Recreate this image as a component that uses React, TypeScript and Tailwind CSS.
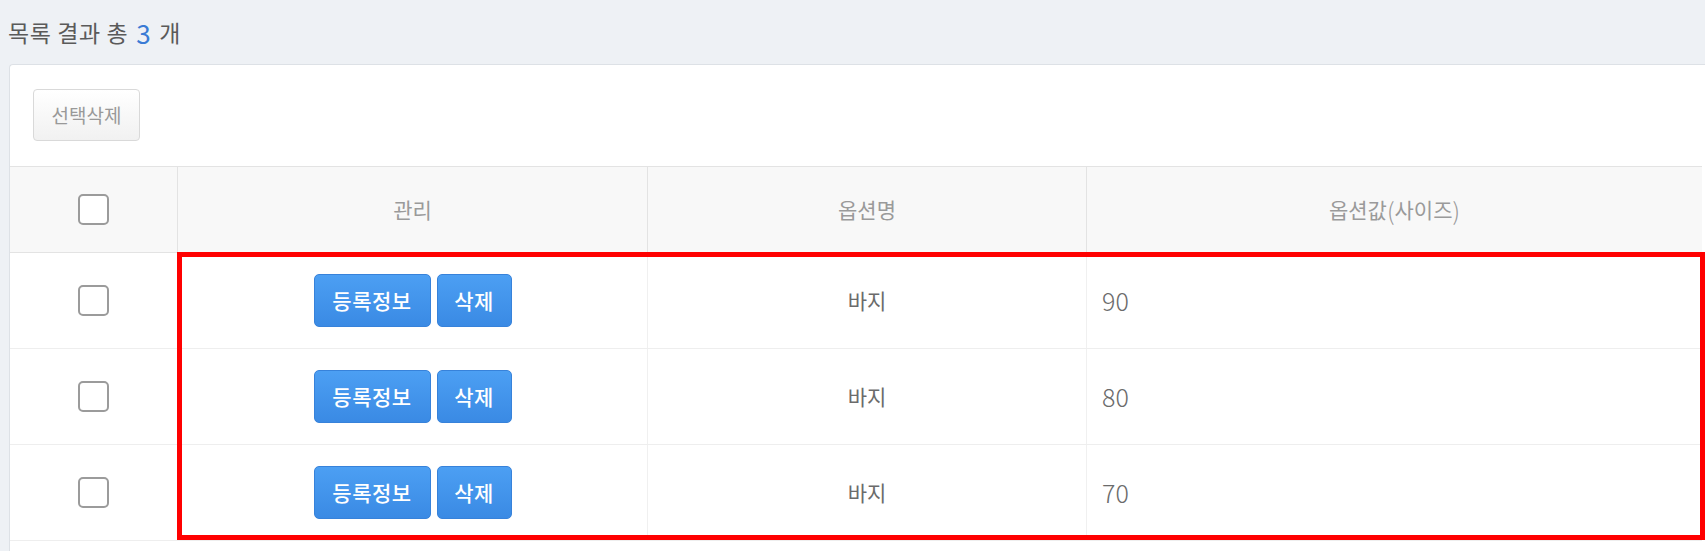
import React from 'react';

interface OptionRow {
  id: number;
  name: string;
  value: string;
}

const rows: OptionRow[] = [
  { id: 1, name: '바지', value: '90' },
  { id: 2, name: '바지', value: '80' },
  { id: 3, name: '바지', value: '70' },
];

function CheckBox() {
  return <span className="block w-[31px] h-[31px] rounded-[5px] border-2 border-[#9b9b9b] bg-white" />;
}

function BlueButton({ label, w }: { label: string; w: string }) {
  return (
    <button
      className={`${w} h-[53px] rounded-[5px] border border-[#3782da] bg-gradient-to-b from-[#4c9ff3] to-[#3a8ae4] text-white text-[21px] font-medium tracking-[0.5px]`}
    >
      {label}
    </button>
  );
}

export default function App() {
  return (
    <div className="relative w-[1705px] h-[551px] overflow-hidden bg-[#eef1f5] font-['Noto_Sans_CJK_KR',sans-serif]">
      <div className="h-[64px] pl-[8px] flex items-center text-[23px] text-[#5a5a5a] tracking-[0.6px]">
        목록 결과 총<span className="text-[#3a7bd5] text-[26px] mx-[8px]">3</span>개
      </div>

      <div className="ml-[9px] bg-white border-l border-t border-[#dde1e6] rounded-tl-[4px] h-[487px]">
        <div className="pl-[23px] pt-[24px] pb-[25px]">
          <button className="w-[107px] h-[52px] rounded-[4px] border border-[#d9d9d9] bg-gradient-to-b from-white to-[#f1f1f1] text-[19px] text-[#999]">
            선택삭제
          </button>
        </div>

        <div className="w-[1692px]">
          <div className="grid grid-cols-[168px_470px_439px_615px] h-[87px] bg-[#f8f8f8] border-t border-b border-[#e3e3e3] text-[21px] text-[#9a9a9a]">
            <div className="flex items-center justify-center border-r border-[#e3e3e3]">
              <CheckBox />
            </div>
            <div className="flex items-center justify-center border-r border-[#e3e3e3]">관리</div>
            <div className="flex items-center justify-center border-r border-[#e3e3e3]">옵션명</div>
            <div className="flex items-center justify-center">
              옵션값<span className="text-[24px] font-light">(</span>사이즈<span className="text-[24px] font-light">)</span>
            </div>
          </div>

          {rows.map(r => (
            <div
              key={r.id}
              className="grid grid-cols-[168px_470px_439px_615px] h-[96px] border-b border-[#eeeeee] text-[21px] text-[#6b6b6b]"
            >
              <div className="flex items-center justify-center border-r border-[#f0f0f0]">
                <CheckBox />
              </div>
              <div className="flex items-center justify-center gap-[6px] border-r border-[#f0f0f0]">
                <BlueButton label="등록정보" w="w-[117px]" />
                <BlueButton label="삭제" w="w-[75px]" />
              </div>
              <div className="flex items-center justify-center border-r border-[#f0f0f0]">{r.name}</div>
              <div className="flex items-center pl-[15px] text-[25px] font-light">{r.value}</div>
            </div>
          ))}
        </div>
      </div>

      <div className="absolute left-[177px] top-[252px] w-[1528px] h-[288px] border-[5px] border-[#ff0000]" />
    </div>
  );
}
